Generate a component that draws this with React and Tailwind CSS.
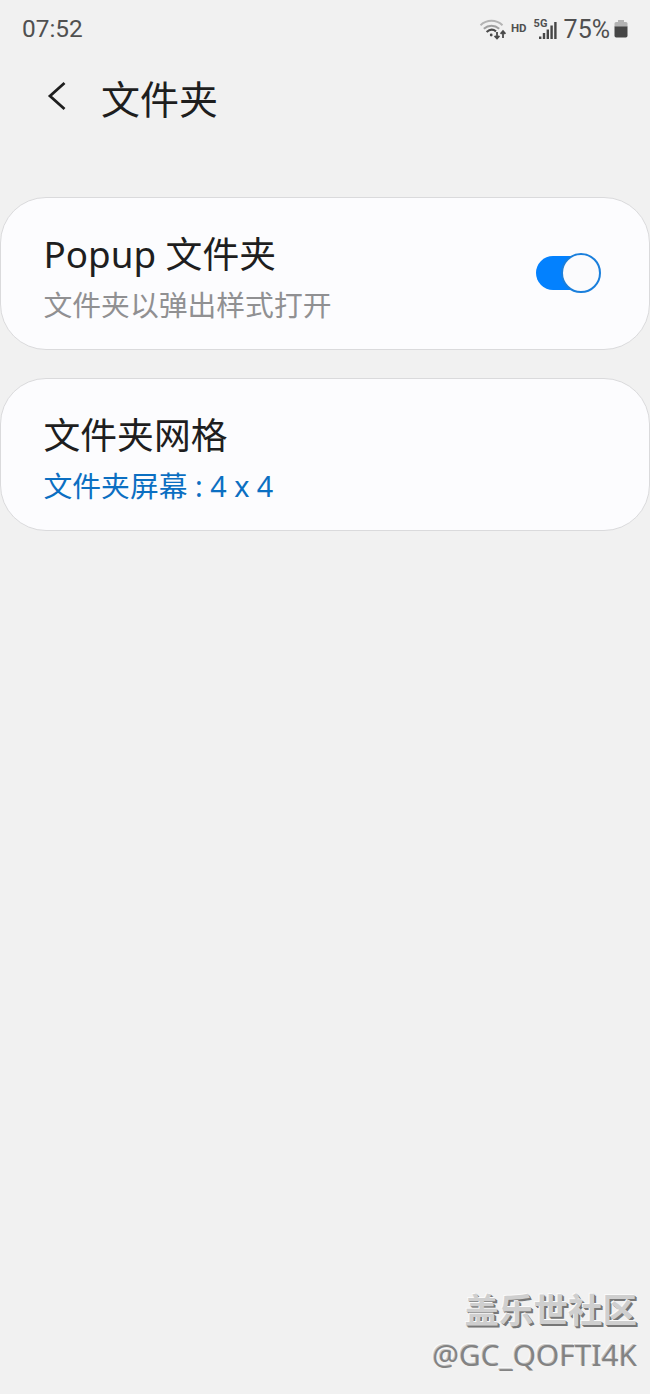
import { useState } from "react";

function WifiIcon() {
  return (
    <svg width="28" height="22" viewBox="0 0 28 22" fill="none">
      <path d="M1.5 7.2C8 1.4 17 1.4 23.5 7.2" stroke="#b4b4b4" strokeWidth="2" />
      <path d="M4.8 10.8C9.4 6.8 15.6 6.8 20.2 10.8" stroke="#a0a0a0" strokeWidth="2" />
      <path d="M7.6 14C10.8 11.2 14.2 11.2 17 13.4" stroke="#4a4a4a" strokeWidth="2.2" />
      <circle cx="12.2" cy="17" r="1.4" fill="#4a4a4a" />
      <path d="M18 14V20M15.6 17.8L18 20.4L20.4 17.8" stroke="#4a4a4a" strokeWidth="1.8" />
      <path d="M24 20V13.6M21.6 15.8L24 13.2L26.4 15.8" stroke="#4a4a4a" strokeWidth="1.8" />
    </svg>
  );
}

function SignalIcon() {
  return (
    <svg width="18" height="17" viewBox="0 0 18 17" fill="#464646">
      <rect x="0" y="14.5" width="2.4" height="2.5" />
      <rect x="3.8" y="11" width="2.4" height="6" />
      <rect x="7.6" y="7.5" width="2.4" height="9.5" />
      <rect x="11.4" y="3.5" width="2.4" height="13.5" />
      <rect x="15.2" y="0" width="2.4" height="17" />
    </svg>
  );
}

function BatteryIcon() {
  return (
    <svg width="14" height="18" viewBox="0 0 14 18">
      <path d="M4 0H10V2H12Q13.5 2 13.5 3.5V7H.5V3.5Q.5 2 2 2H4Z" fill="#b3b3b3" />
      <path d="M.5 6.5H13.5V15.8Q13.5 17.5 11.8 17.5H2.2Q.5 17.5 .5 15.8Z" fill="#464646" />
    </svg>
  );
}

function StatusBar() {
  return (
    <div className="flex h-[58px] items-center justify-between pl-[22px] pr-[22px] font-[Roboto,sans-serif] text-[#505050]">
      <span className="text-[24.4px] leading-[58px]">07:52</span>
      <div className="flex items-center">
        <WifiIcon />
        <span className="ml-[4px] text-[11.5px] font-bold">HD</span>
        <div className="relative ml-[12px] mt-[3px]">
          <SignalIcon />
          <span className="absolute -left-[5px] -top-[4px] text-[11px] font-bold leading-[12px]">5G</span>
        </div>
        <span className="ml-[7px] mt-px text-[25px] leading-[57px]">75%</span>
        <div className="ml-[4px]">
          <BatteryIcon />
        </div>
      </div>
    </div>
  );
}

function Toggle({ checked, onChange }) {
  return (
    <button
      type="button"
      role="switch"
      aria-checked={checked}
      onClick={() => onChange(!checked)}
      className={`-mt-px flex h-[34px] w-[65px] items-center rounded-full ${
        checked ? "justify-end bg-[linear-gradient(to_right,#0381fe_50px,transparent_50px)]" : "justify-start bg-gray-400"
      }`}
    >
      <span className="size-[40px] shrink-0 rounded-full border-2 border-[#1a7fdc] bg-[#fbfbfd]" />
    </button>
  );
}

function Card({ title, subtitle, subtitleClass, children }) {
  return (
    <section className="flex h-[152.5px] items-center justify-between rounded-[46px] border border-[#dadadc] bg-[#fcfcfe] pl-[42.5px] pr-[48px]">
      <div className="pt-[5px]">
        <h2 className="h-[53px] text-[36.8px] leading-[54px] text-[#1e1e20]">{title}</h2>
        <p className={`h-[45px] text-[28.8px] leading-[50px] ${subtitleClass}`}>{subtitle}</p>
      </div>
      {children}
    </section>
  );
}

export default function App() {
  const [popup, setPopup] = useState(true);

  return (
    <div className="flex h-[1394px] w-[650px] flex-col overflow-hidden bg-[#f1f1f1] font-['Noto_Sans','Noto_Sans_CJK_SC',sans-serif]">
      <StatusBar />

      <header className="flex h-[84px] items-center pl-[47px]">
        <svg width="20" height="30" viewBox="0 0 20 30" fill="none" className="-mt-[8px]">
          <path d="M17.5 2L3 15L17.5 28" stroke="#1e1e1e" strokeWidth="2.8" />
        </svg>
        <h1 className="-mt-[2px] ml-[34px] h-[84px] text-[39px] leading-[84px] text-[#1e1e1e]">文件夹</h1>
      </header>

      <main className="mt-[54px] flex flex-col gap-[28.5px] pt-px">
        <Card title="Popup 文件夹" subtitle="文件夹以弹出样式打开" subtitleClass="text-[#909092]">
          <Toggle checked={popup} onChange={setPopup} />
        </Card>
        <Card title="文件夹网格" subtitle="文件夹屏幕 : 4 x 4" subtitleClass="text-[#0b6fc2]" />
      </main>

      <footer className="mt-auto flex flex-col items-end pb-[18px] pr-[13px]">
        <span className="h-[44px] text-[34.5px] font-bold leading-[43px] text-[#cfcfcf] [text-shadow:-1px_-1px_0_#fafafa,1px_1px_0_#777,2px_2px_0_#777]">
          盖乐世社区
        </span>
        <span className="h-[44px] text-[29.8px] leading-[45px] text-[#838383] [text-shadow:-1px_-1px_0_#cccccc,-2px_-2px_0_#fafafa]">
          @GC_QOFTI4K
        </span>
      </footer>
    </div>
  );
}
